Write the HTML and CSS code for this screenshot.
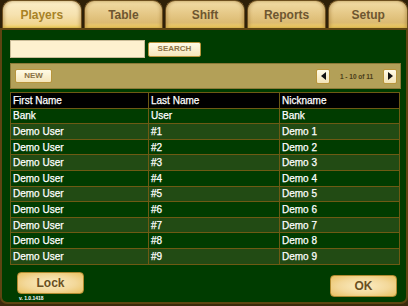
FILE: index.html
```html
<!DOCTYPE html>
<html lang="en">
<head>
  <meta charset="utf-8">
  <title>Players</title>
  <link rel="stylesheet" href="styles.css">
</head>
<body>
  <div class="tabs">
    <a class="tab active" href="#">Players</a>
    <a class="tab" href="#">Table</a>
    <a class="tab" href="#">Shift</a>
    <a class="tab" href="#">Reports</a>
    <a class="tab" href="#">Setup</a>
  </div>

  <div class="panel">
    <div class="search-row">
      <input class="search-box" type="text">
      <button class="small-btn search-btn">SEARCH</button>
    </div>

    <div class="toolbar">
      <button class="small-btn new-btn">NEW</button>
      <div class="pager">
        <button class="arrow-btn"><span class="tri left"></span></button>
        <span class="pager-text">1 - 10 of 11</span>
        <button class="arrow-btn"><span class="tri right"></span></button>
      </div>
    </div>

    <table class="players">
      <tr class="head"><td class="c1">First Name</td><td class="c2">Last Name</td><td>Nickname</td></tr>
      <tr><td>Bank</td><td>User</td><td>Bank</td></tr>
      <tr class="alt"><td>Demo User</td><td>#1</td><td>Demo 1</td></tr>
      <tr><td>Demo User</td><td>#2</td><td>Demo 2</td></tr>
      <tr class="alt"><td>Demo User</td><td>#3</td><td>Demo 3</td></tr>
      <tr><td>Demo User</td><td>#4</td><td>Demo 4</td></tr>
      <tr class="alt"><td>Demo User</td><td>#5</td><td>Demo 5</td></tr>
      <tr><td>Demo User</td><td>#6</td><td>Demo 6</td></tr>
      <tr class="alt"><td>Demo User</td><td>#7</td><td>Demo 7</td></tr>
      <tr><td>Demo User</td><td>#8</td><td>Demo 8</td></tr>
      <tr class="alt"><td>Demo User</td><td>#9</td><td>Demo 9</td></tr>
    </table>

    <div class="footer">
      <div class="lock-col">
        <button class="big-btn">Lock</button>
        <div class="version">v. 1.0.1418</div>
      </div>
      <button class="big-btn ok">OK</button>
    </div>
  </div>
</body>
</html>
```

FILE: styles.css
```css
* {
    box-sizing: border-box;
}
html, body {
    margin: 0;
    padding: 0;
}
body {
    width: 408px;
    height: 306px;
    background: #3a2a0c;
    font-family: "Liberation Sans", Arial, sans-serif;
    overflow: hidden;
}

/* tabs */
.tabs {
    display: flex;
    gap: 2px;
    height: 28px;
    padding-left: 2px;
    background: #2e2008;
}
.tab {
    flex: 1;
    display: flex;
    align-items: center;
    justify-content: center;
    border-radius: 10px 10px 0 0;
    border: 1px solid #6e5020;
    border-bottom: 0;
    background: linear-gradient(to bottom, #f1dca6 0%, #e6c988 45%, #dcbb72 80%, #f2d060 100%);
    box-shadow: inset 2px 0 3px rgba(150, 110, 40, 0.35), inset -2px 0 3px rgba(150, 110, 40, 0.35);
    color: #6e5630;
    font-size: 12px;
    font-weight: bold;
    text-decoration: none;
}
.tab.active {
    background: linear-gradient(to bottom, #fbeec8 0%, #f6e2b0 50%, #f0d590 85%, #f6d860 100%);
    color: #a88226;
}

/* main panel */
.panel {
    height: 276px;
    background: #003c00;
    border: 2px solid #5e4512;
    border-radius: 0 0 7px 7px;
    padding: 8px 6px 0 8px;
}

.search-row {
    display: flex;
    align-items: center;
    gap: 3px;
    margin-top: 2px;
}
.search-box {
    width: 135px;
    height: 18px;
    background: #fdf1cf;
    border: 1px solid #c9bc98;
    margin: 0;
}
.small-btn {
    height: 14px;
    padding: 0;
    background: linear-gradient(to bottom, #fffbe6, #f5e6bb);
    border: 1px solid #b8953c;
    border-radius: 2px;
    color: #8a7244;
    font-family: "Liberation Sans", Arial, sans-serif;
    font-size: 8px;
    font-weight: bold;
    line-height: 12px;
}
.search-btn {
    width: 53px;
    height: 15px;
}
.new-btn {
    width: 37px;
    height: 14px;
}

.toolbar {
    display: flex;
    align-items: center;
    justify-content: space-between;
    height: 26px;
    margin: 5px -1px 0 0;
    padding: 0 3px 0 4px;
    background: #b3a058;
    border: 1px solid #8c7a38;
}
.pager {
    display: flex;
    align-items: center;
}
.arrow-btn {
    width: 14px;
    height: 15px;
    padding: 0;
    display: flex;
    align-items: center;
    justify-content: center;
    background: linear-gradient(to bottom, #fffbe8, #f3e4b8);
    border: 1px solid #b8953c;
    border-radius: 2px;
}
.tri {
    width: 0;
    height: 0;
    border-top: 4px solid transparent;
    border-bottom: 4px solid transparent;
}
.tri.left {
    border-right: 5px solid #111;
}
.tri.right {
    border-left: 5px solid #111;
}
.pager-text {
    width: 53px;
    text-align: center;
    font-size: 6.5px;
    font-weight: bold;
    color: #4a3c18;
}

/* table */
.players {
    width: 100%;
    margin-top: 3px;
    border-collapse: collapse;
    border: 1px solid #5e4a10;
}
.players td {
    height: 15.6px;
    padding: 0 2px;
    border: 1px solid #6e5a14;
    color: #fff;
    font-size: 10px;
    line-height: 13px;
    white-space: nowrap;
    -webkit-text-stroke: 0.25px #fff;
}
.players .c1 {
    width: 138px;
}
.players .c2 {
    width: 131px;
}
.players tr.head td {
    background: #000;
}
.players tr td {
    background: #013c00;
}
.players tr.alt td {
    background: #224b14;
}

/* footer */
.footer {
    display: flex;
    justify-content: space-between;
    margin-top: 7px;
    padding: 0 3px 0 7px;
}
.lock-col {
    display: flex;
    flex-direction: column;
    align-items: flex-start;
}
.big-btn {
    width: 67px;
    height: 22px;
    padding: 0;
    background: radial-gradient(ellipse at center, #fbedc4 0%, #f3d89a 55%, #e9c060 100%);
    border: 1px solid #b08a30;
    border-radius: 4px;
    color: #6a5022;
    font-family: "Liberation Sans", Arial, sans-serif;
    font-size: 12px;
    font-weight: bold;
}
.big-btn.ok {
    margin-top: 3px;
}
.version {
    margin: 1px 0 0 2px;
    font-size: 5px;
    font-weight: bold;
    color: #fff;
}
```
